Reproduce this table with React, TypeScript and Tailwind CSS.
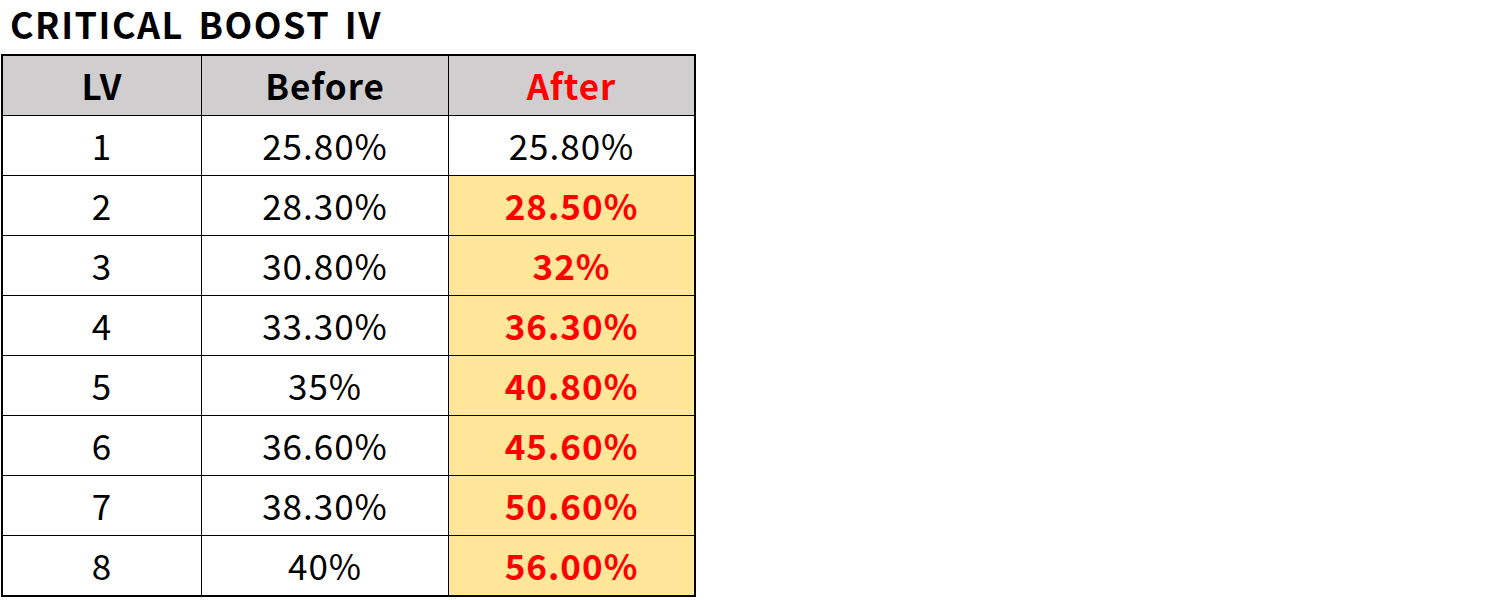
const rows = [
  { lv: '1', before: '25.80%', after: '25.80%', changed: false },
  { lv: '2', before: '28.30%', after: '28.50%', changed: true },
  { lv: '3', before: '30.80%', after: '32%', changed: true },
  { lv: '4', before: '33.30%', after: '36.30%', changed: true },
  { lv: '5', before: '35%', after: '40.80%', changed: true },
  { lv: '6', before: '36.60%', after: '45.60%', changed: true },
  { lv: '7', before: '38.30%', after: '50.60%', changed: true },
  { lv: '8', before: '40%', after: '56.00%', changed: true },
];

export default function App() {
  return (
    <main
      className="min-h-screen bg-white text-black pt-[5px] pl-[1px]"
      style={{ fontFamily: '"Noto Sans CJK KR", "Noto Sans", sans-serif' }}
    >
      {/* タイトル */}
      <h1 className="h-[49px] pl-[9px] text-[36px] leading-[36px] font-bold tracking-[1.5px] [word-spacing:5px]">
        CRITICAL BOOST IV
      </h1>

      {/* 表 */}
      <div className="w-fit border-2 border-black bg-black grid grid-cols-[198px_246px_245px] auto-rows-[59px] gap-px text-[35px] tracking-[1px]">
        <div className="bg-[#d0cece] flex items-center justify-center font-bold">LV</div>
        <div className="bg-[#d0cece] flex items-center justify-center font-bold">Before</div>
        <div className="bg-[#d0cece] flex items-center justify-center font-bold text-[#ff0000]">After</div>
        {rows.map(row => (
          <div key={row.lv} className="contents">
            <div className="bg-white flex items-center justify-center">{row.lv}</div>
            <div className="bg-white flex items-center justify-center">{row.before}</div>
            <div
              className={
                row.changed
                  ? 'bg-[#ffe699] flex items-center justify-center font-bold text-[#ff0000]'
                  : 'bg-white flex items-center justify-center'
              }
            >
              {row.after}
            </div>
          </div>
        ))}
      </div>
    </main>
  );
}
